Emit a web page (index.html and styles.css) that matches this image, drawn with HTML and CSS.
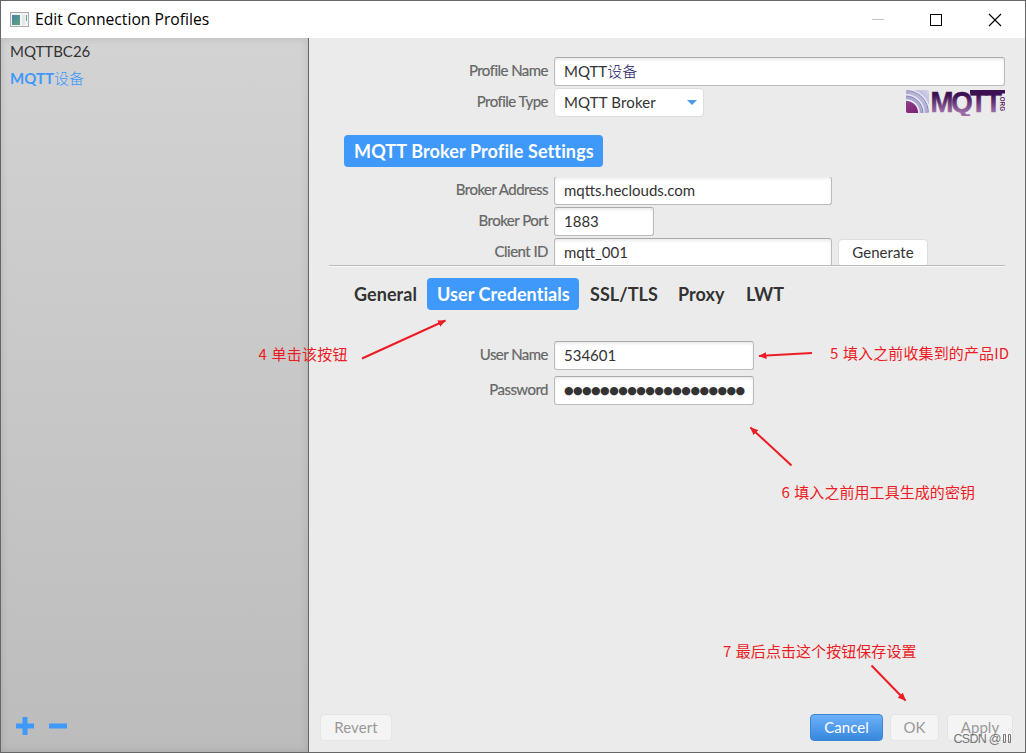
FILE: index.html
```html
<!DOCTYPE html>
<html lang="en">
<head>
    <meta charset="UTF-8">
    <meta name="viewport" content="width=device-width, initial-scale=1.0">
    <title>Edit Connection Profiles</title>
    <link rel="stylesheet" href="styles.css">
</head>
<body>
    <div class="window">
        <div class="titlebar">
            <svg class="app-icon" width="19" height="16" viewBox="0 0 19 16">
                <defs>
                    <linearGradient id="iconFill" x1="0" y1="0" x2="1" y2="1">
                        <stop offset="0" stop-color="#4a7fa8"/>
                        <stop offset="1" stop-color="#5aa87c"/>
                    </linearGradient>
                </defs>
                <rect x="0.5" y="0.5" width="18" height="14" fill="#f4f4f4" stroke="#a9adb2"/>
                <rect x="2" y="3" width="8" height="10" fill="url(#iconFill)"/>
                <rect x="12" y="3" width="3" height="10" fill="#e4e6e8"/>
                <rect x="16" y="3" width="1" height="6" fill="#5fa489"/>
            </svg>
            <span class="title">Edit Connection Profiles</span>
            <svg class="controls" width="130" height="14" viewBox="0 0 130 14">
                <path d="M0 6.5H12" stroke="#c4c4c4"/>
                <rect x="58.5" y="1.5" width="11" height="11" fill="none" stroke="#000"/>
                <path d="M117 1L129 13M129 1L117 13" stroke="#000" stroke-width="1.1"/>
            </svg>
        </div>

        <div class="content">
            <div class="sidebar">
                <ul class="profiles">
                    <li>MQTTBC26</li>
                    <li class="selected">MQTT<span>设备</span></li>
                </ul>
                <svg class="list-actions" width="52" height="18" viewBox="0 0 52 18">
                    <path d="M0 9H18M9 0V18M33 9H51" stroke="#3f99fb" stroke-width="5"/>
                </svg>
            </div>

            <div class="main">
                <div class="row">
                    <label>Profile Name</label>
                    <div class="field wide">MQTT<span class="cn">设备</span></div>
                </div>
                <div class="row">
                    <label>Profile Type</label>
                    <div class="combo"><span>MQTT Broker</span><i></i></div>
                    <svg class="logo" width="100" height="28" viewBox="0 0 100 28">
                        <defs>
                            <linearGradient id="logoText" x1="0" y1="0" x2="0" y2="24" gradientUnits="userSpaceOnUse">
                                <stop offset="0.3" stop-color="#3c1053"/>
                                <stop offset="1" stop-color="#9c6ba6"/>
                            </linearGradient>
                            <linearGradient id="logoWave" x1="0" y1="1" x2="1" y2="0">
                                <stop offset="0.4" stop-color="#a9a7d0"/>
                                <stop offset="1" stop-color="#d4d4ea"/>
                            </linearGradient>
                            <linearGradient id="logoDot" x1="0" y1="0" x2="1" y2="1">
                                <stop offset="0" stop-color="#a04c95"/>
                                <stop offset="1" stop-color="#6c1268"/>
                            </linearGradient>
                            <clipPath id="logoClip"><rect x="1" y="2" width="23" height="23" rx="2"/></clipPath>
                        </defs>
                        <g clip-path="url(#logoClip)" fill="none">
                            <rect x="1" y="2" width="23" height="23" fill="url(#logoWave)"/>
                            <circle cx="1" cy="25" r="13" stroke="#f0f0f8" stroke-width="1.5"/>
                            <circle cx="1" cy="25" r="17" stroke="#8482b8"/>
                            <circle cx="1" cy="25" r="18.2" stroke="#e8e8f4" stroke-width="1.4"/>
                            <circle cx="1" cy="25" r="22.5" stroke="#8482b8"/>
                            <circle cx="1" cy="25" r="23.7" stroke="#e8e8f4" stroke-width="1.4"/>
                            <circle cx="1" cy="25" r="12" fill="url(#logoDot)"/>
                        </g>
                        <text class="logo-text" x="25.5" y="23.5" textLength="69" lengthAdjust="spacingAndGlyphs" fill="url(#logoText)">MQTT</text>
                        <rect x="65" y="2" width="35" height="3.5" fill="#3c1053"/>
                        <text class="logo-org" transform="translate(94.5 7) rotate(90)" textLength="16" lengthAdjust="spacingAndGlyphs">.ORG</text>
                    </svg>
                </div>

                <h2 class="heading">MQTT Broker Profile Settings</h2>

                <div class="broker">
                    <div class="row">
                        <label>Broker Address</label>
                        <div class="field medium">mqtts.heclouds.com</div>
                    </div>
                    <div class="row">
                        <label>Broker Port</label>
                        <div class="field small">1883</div>
                    </div>
                    <div class="row">
                        <label>Client ID</label>
                        <div class="field medium">mqtt_001</div>
                        <button class="generate">Generate</button>
                    </div>
                </div>

                <div class="tabs">
                    <div class="tab general">General</div>
                    <div class="tab credentials active">User Credentials</div>
                    <div class="tab ssl">SSL/TLS</div>
                    <div class="tab proxy">Proxy</div>
                    <div class="tab lwt">LWT</div>
                </div>

                <div class="login">
                    <div class="row">
                        <label>User Name</label>
                        <div class="field login-field">534601</div>
                    </div>
                    <div class="row">
                        <label>Password</label>
                        <div class="field login-field dots">●●●●●●●●●●●●●●●●●●●●</div>
                    </div>
                </div>

                <div class="footer">
                    <button class="revert" disabled>Revert</button>
                    <button class="cancel">Cancel</button>
                    <button class="ok" disabled>OK</button>
                    <button class="apply" disabled>Apply</button>
                </div>
            </div>
        </div>
    </div>

    <!-- notes on top of the dialog -->
    <svg class="notes" width="1026" height="753" viewBox="0 0 1026 753">
        <defs>
            <marker id="tip" markerUnits="userSpaceOnUse" markerWidth="8" markerHeight="7" refX="7.5" refY="3.5" orient="auto">
                <path d="M0 0L8 3.5L0 7z" fill="#ed1c24"/>
            </marker>
        </defs>
        <g stroke="#ed1c24" stroke-width="2" marker-end="url(#tip)">
            <path d="M362 358.5L445.5 320.5"/>
            <path d="M812 353L759 356"/>
            <path d="M791.5 465.5L750.5 427.5"/>
            <path d="M871.5 665.5L905.5 700.5"/>
        </g>
        <g class="note-text">
            <text x="258.5" y="360" textLength="89">4 单击该按钮</text>
            <text x="830" y="359" textLength="179">5 填入之前收集到的产品ID</text>
            <text x="781.5" y="498" textLength="193.5">6 填入之前用工具生成的密钥</text>
            <text x="723" y="657" textLength="193.5">7 最后点击这个按钮保存设置</text>
        </g>
        <text class="watermark" x="953.5" y="743" textLength="48">CSDN @</text>
        <path d="M1003.5 734.5h2v8h-2zM1008.5 734.5h2v8h-2z" fill="none" stroke="#777"/>
    </svg>
</body>
</html>
```

FILE: styles.css
```css
*{
    margin:0;
    padding:0;
    box-sizing: border-box;
}
body{
    font-family: Lato, "Noto Sans CJK SC", sans-serif;
    font-size: 15px;
    color: #333;
    overflow: hidden;
}
.window{
    width: 1026px;
    height: 753px;
    border: 1px solid #666;
    background-color: #ebebeb;
    display: flex;
    flex-direction: column;
}
.titlebar{
    height: 37px;
    background-color: #fff;
    display: flex;
    align-items: center;
    padding: 0 23px 0 9px;
}
.title{
    font-family: "Open Sans", sans-serif;
    font-size: 15.7px;
    color: #000;
    margin: -1px 0 0 6px;
}
.controls{
    margin-left: auto;
}
.content{
    flex: 1;
    display: flex;
}
.sidebar{
    width: 308px;
    border-right: 1px solid #666;
    background: linear-gradient(#d3d3d3, #bcbcbc);
    box-shadow: inset 0 0 8px rgba(0,0,0,0.12);
    display: flex;
    flex-direction: column;
    justify-content: space-between;
    padding: 0 9px 17px;
}
.profiles{
    list-style: none;
}
.profiles li{
    height: 27px;
    line-height: 27px;
}
.profiles .selected{
    color: #3f99fb;
    font-weight: bold;
}
.profiles .selected span{
    font-weight: 300;
}
.list-actions{
    margin-left: 6px;
}
.main{
    flex: 1;
    display: flex;
    flex-direction: column;
    padding: 19px 20px 11px;
}
.row{
    display: flex;
    height: 29px;
    margin-bottom: 2px;
}
label{
    width: 219px;
    margin-right: 6px;
    text-align: right;
    line-height: 26px;
    color: #666;
    letter-spacing: -0.53px;
    -webkit-text-stroke: 0.2px #666;
}
.field{
    height: 29px;
    line-height: 26px;
    border: 1px solid #bbb;
    border-top-color: #aaa;
    border-radius: 3px;
    background-color: #fff;
    box-shadow: inset 0 2px 3px rgba(0,0,0,0.08);
    padding-left: 9px;
}
.wide{
    width: 451px;
}
.cn{
    color: #222266;
    font-weight: 300;
}
.medium{
    width: 278px;
}
.small{
    width: 100px;
}
.combo{
    width: 150px;
    height: 29px;
    border: 1px solid #ddd;
    border-radius: 4px;
    background-color: #fff;
    display: flex;
    align-items: center;
    justify-content: space-between;
    padding: 0 6px 1px 9px;
    letter-spacing: 0.15px;
}
.combo i{
    border: 5px solid transparent;
    border-top-color: #4a9ae8;
    border-bottom: 0;
}
.logo{
    margin-left: auto;
}
.logo-text{
    font-family: "Liberation Sans", sans-serif;
    font-weight: bold;
    font-size: 30px;
    letter-spacing: -2.5px;
    stroke: url(#logoText);
    stroke-width: 0.6px;
}
.logo-org{
    font-family: "Liberation Sans", sans-serif;
    font-weight: bold;
    font-size: 7px;
    fill: #5d2f70;
}
.heading{
    width: 259px;
    height: 32px;
    line-height: 32px;
    margin: 16px 0 10px 15px;
    padding-left: 10px;
    border-radius: 4px;
    background-color: #3f99fb;
    color: #fff;
    font-size: 18px;
    letter-spacing: 0.12px;
    white-space: nowrap;
}
.broker{
    height: 89px;
    border-bottom: 1px solid #bbb;
    box-shadow: 0 1px #f8f8f8;
    overflow: hidden;
}
/* the pane is scrolled down by a pixel */
.broker .row:first-child{
    margin-top: -1px;
}
.generate{
    width: 90px;
    height: 28px;
    margin: 1px 0 0 6px;
    padding-bottom: 3px;
}
button{
    height: 27px;
    padding-bottom: 2px;
    border: 1px solid #ddd;
    border-radius: 4px;
    background-color: #fff;
    color: #333;
    font: 15px Lato, sans-serif;
    letter-spacing: 0.05px;
}
.tabs{
    display: flex;
    margin: 12px 0 31px 15px;
    height: 32px;
    line-height: 32px;
    font-size: 18px;
    font-weight: bold;
    letter-spacing: 0.06px;
}
.tab{
    padding-left: 10px;
    border-radius: 4px;
    white-space: nowrap;
}
.active{
    background-color: #3f99fb;
    color: #fff;
}
.general{
    width: 83px;
}
.credentials{
    width: 152px;
    margin-right: 1px;
}
.ssl{
    width: 88px;
}
.proxy{
    width: 68px;
}
.login .row{
    margin-bottom: 6px;
}
.login-field{
    width: 200px;
}
.dots{
    font-family: "DejaVu Sans", sans-serif;
    font-size: 11px;
    line-height: 27px;
    letter-spacing: calc(9px - 0.87em);
    white-space: nowrap;
}
.footer{
    display: flex;
    align-items: center;
    margin: auto -8px 0 -9px;
}
.footer button:disabled{
    background-color: #f4f4f4;
    border-color: #e4e4e4;
    color: #999;
}
.revert{
    width: 72px;
}
.footer .cancel{
    width: 73px;
    margin: 0 7px 0 auto;
    border: 1px solid #3c86d4;
    background: linear-gradient(#6db1fb, #3787dd);
    color: #fff;
}
.ok{
    width: 49px;
    margin-right: 8px;
}
.apply{
    width: 66px;
}
.notes{
    position: absolute;
    left: 0;
    top: 0;
}
.note-text{
    font-family: "Noto Sans CJK SC", sans-serif;
    font-size: 15px;
    word-spacing: 1px;
    fill: #ed1c24;
}
.watermark{
    font-family: "Liberation Sans", sans-serif;
    font-size: 12.5px;
    fill: #777;
}
```
